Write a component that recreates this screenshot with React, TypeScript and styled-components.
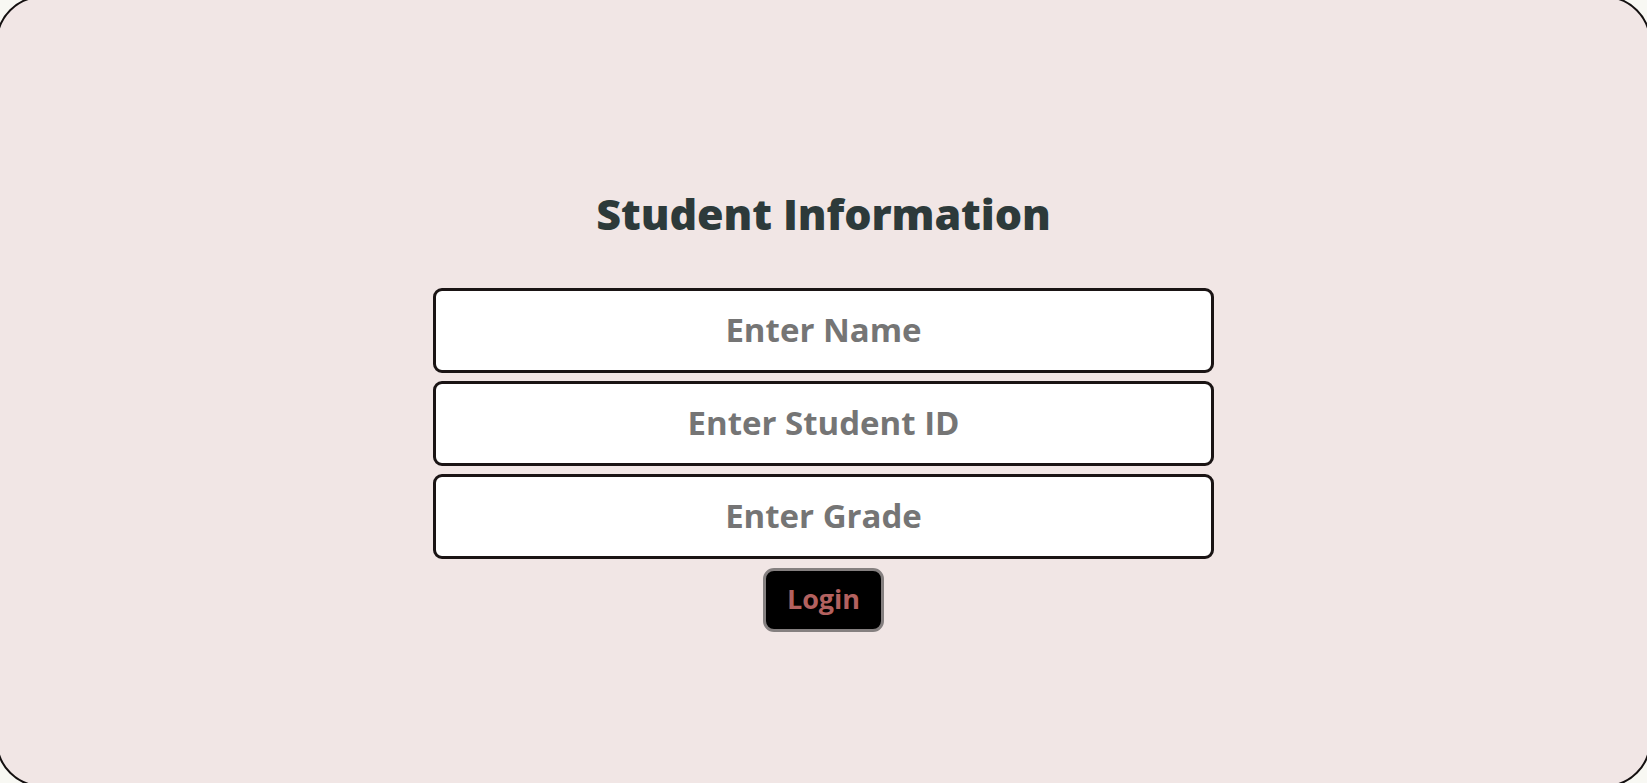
import React from "react";
import styled, { createGlobalStyle } from "styled-components";

const GlobalStyle = createGlobalStyle`
  html, body {
    margin: 0;
    padding: 0;
    overflow: hidden;
    background: #f8f8f3;
  }
  * { box-sizing: border-box; }
`;

const Frame = styled.main`
  width: calc(100vw + 8px);
  height: calc(100vh + 8px);
  margin: -4px;
  border: 2px solid #141010;
  border-radius: 46px;
  background: #f1e6e5;
  display: flex;
  flex-direction: column;
  align-items: center;
  padding-top: 188px;
  font-family: "Open Sans", "Noto Sans", sans-serif;
`;

const Title = styled.h1`
  margin: 0 0 46px;
  font-size: 43px;
  line-height: 56px;
  font-weight: 800;
  color: #2d3a3a;
  letter-spacing: -0.1px;
`;

const Form = styled.form`
  display: flex;
  flex-direction: column;
  align-items: center;
  gap: 8px;
`;

const Field = styled.input`
  width: 781px;
  height: 85px;
  border: 3px solid #1a1414;
  border-radius: 9px;
  background: #ffffff;
  font-family: "Open Sans", "Noto Sans", sans-serif;
  font-size: 33px;
  font-weight: 700;
  color: #2d3a3a;
  text-align: center;
  outline: none;
  padding: 0 0 3px;
  &::placeholder {
    color: #757575;
    opacity: 1;
  }
`;

const LoginButton = styled.button`
  margin-top: 1px;
  width: 121px;
  height: 64px;
  border: 3px solid #858080;
  border-radius: 11px;
  background: #000000;
  color: #b3615f;
  font-family: "Open Sans", "Noto Sans", sans-serif;
  font-size: 27px;
  font-weight: 700;
  cursor: pointer;
  padding: 0 0 3px;
`;

export default function App() {
  return (
    <>
      <GlobalStyle />
      <Frame>
        <Title>Student Information</Title>
        <Form onSubmit={(e) => e.preventDefault()}>
          <Field type="text" placeholder="Enter Name" />
          <Field type="text" placeholder="Enter Student ID" />
          <Field type="text" placeholder="Enter Grade" />
          <LoginButton type="submit">Login</LoginButton>
        </Form>
      </Frame>
    </>
  );
}
